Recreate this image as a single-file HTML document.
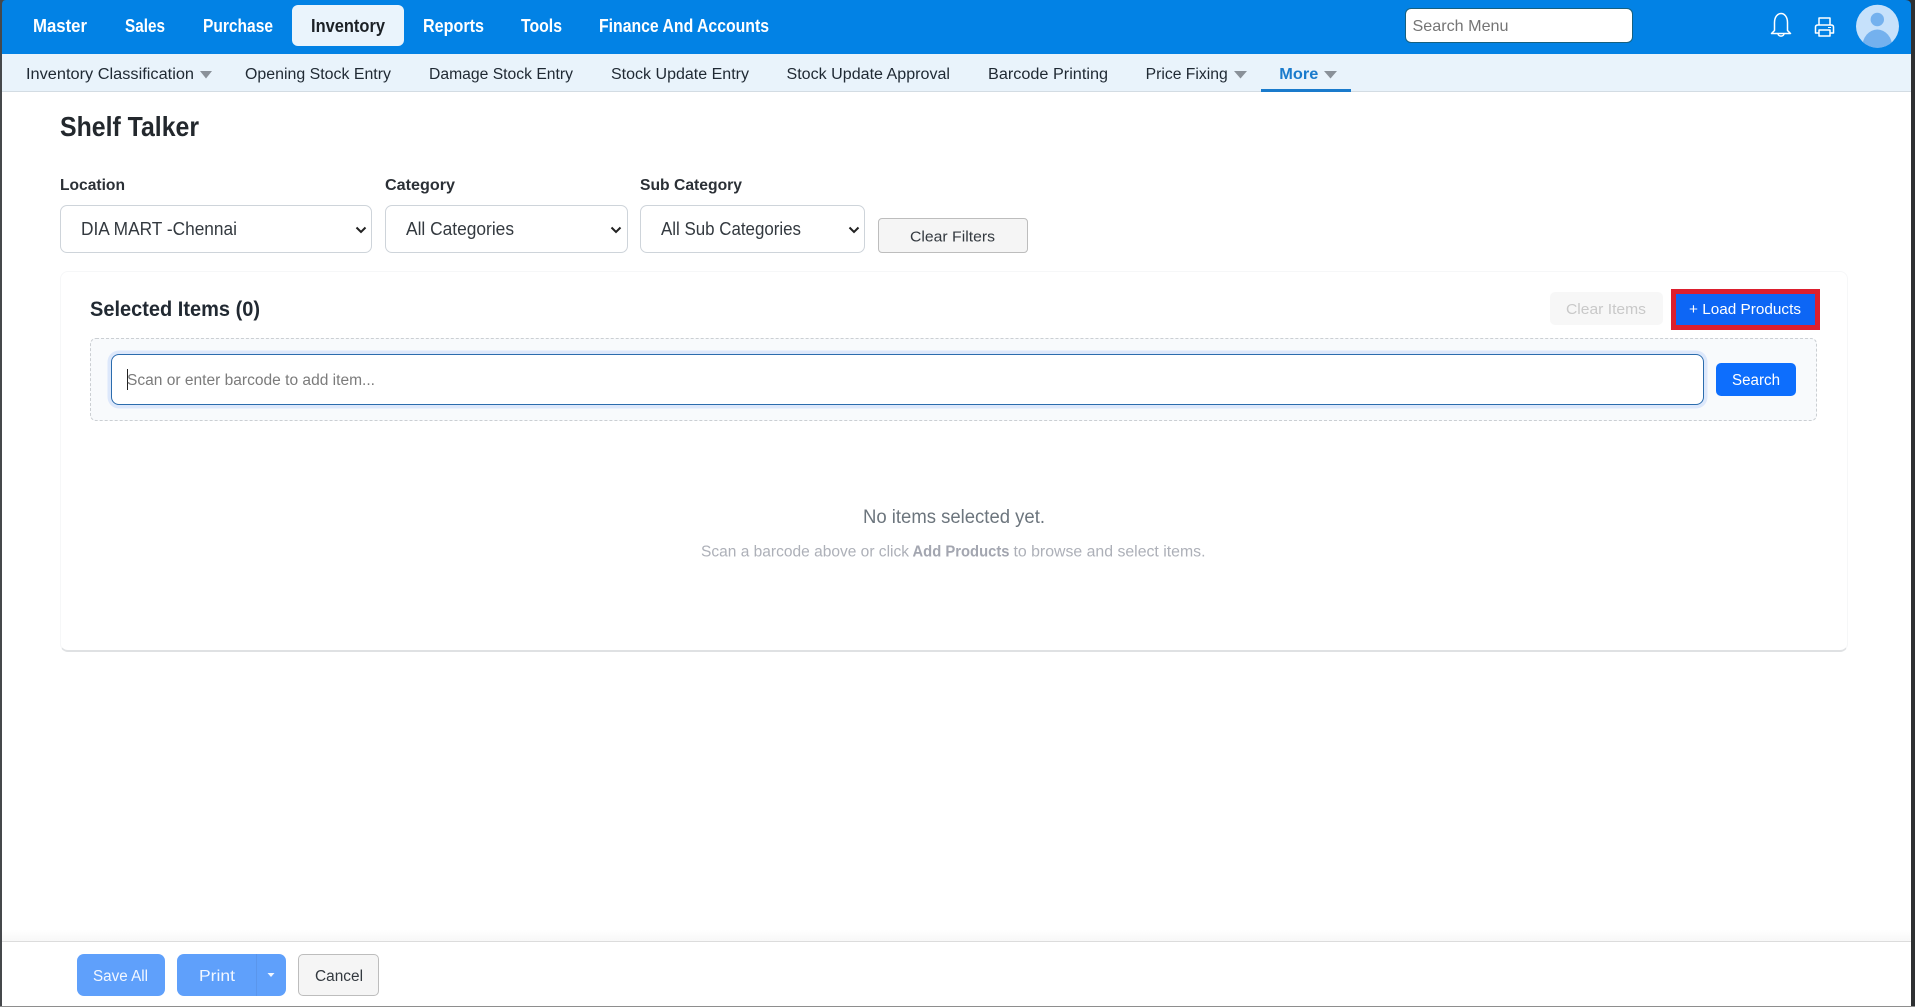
<!DOCTYPE html>
<html lang="en">
<head>
<meta charset="utf-8">
<title>Shelf Talker</title>
<style>
html,body{margin:0;padding:0;background:#fff;}
body{position:relative;width:1915px;height:1007px;overflow:hidden;font-family:"Liberation Sans",sans-serif;}
.b{position:absolute;box-sizing:border-box;}
svg.t{position:absolute;left:0;top:0;}
svg.t text{font-family:"Liberation Sans",sans-serif;}
.nav{font-size:18px;font-weight:700;fill:#fff;}
.sub{font-size:15.5px;fill:#1f2933;}
.lab{font-size:16px;font-weight:700;fill:#2b3036;}
.sel{font-size:18px;fill:#33393f;}
</style>
</head>
<body>
<div class="b" style="left:0;top:0;width:1915px;height:54px;background:#0282e5;"></div>
<div class="b" style="left:0;top:54px;width:1915px;height:38px;background:#e9f3fb;border-bottom:1px solid #d3dce3;"></div>
<div class="b" style="left:292px;top:5px;width:112px;height:41px;background:#eaf4fc;border-radius:6px;"></div>
<div class="b" style="left:1404.500px;top:8px;width:228px;height:35px;background:#fff;border:1px solid #16607f;border-radius:6px;"></div>
<div class="b" style="left:1261px;top:89px;width:90px;height:3px;background:#1a7bcc;"></div>

<div class="b" style="left:60px;top:205px;width:312px;height:48px;background:#fff;border:1px solid #ced4da;border-radius:7px;"></div>
<div class="b" style="left:385px;top:205px;width:243px;height:48px;background:#fff;border:1px solid #ced4da;border-radius:7px;"></div>
<div class="b" style="left:640px;top:205px;width:225px;height:48px;background:#fff;border:1px solid #ced4da;border-radius:7px;"></div>
<div class="b" style="left:878px;top:218px;width:150px;height:35px;background:#f5f5f5;border:1px solid #bdbdbd;border-radius:4px;"></div>

<div class="b" style="left:59.500px;top:271px;width:1788px;height:381px;background:#fff;border:1px solid #f6f7f8;border-bottom:2px solid #dfe1e3;border-radius:8px;"></div>
<div class="b" style="left:1550px;top:292px;width:113px;height:33px;background:#f7f7f7;border-radius:5px;"></div>
<div class="b" style="left:1671px;top:289px;width:149px;height:41px;background:#0d66f5;border:5px solid #dc1f2e;"></div>
<div class="b" style="left:90px;top:338px;width:1727px;height:83px;background:#f8fafc;border:1px dashed #cbcfd3;border-radius:6px;"></div>
<div class="b" style="left:111px;top:354px;width:1593px;height:51px;background:#fff;border:1.5px solid #2b6cad;border-radius:8px;box-shadow:0 0 0 3.5px #dde8fb;"></div>
<div class="b" style="left:127px;top:369px;width:1px;height:21px;background:#222;"></div>
<div class="b" style="left:1716px;top:363px;width:80px;height:33px;background:#0d6efd;border-radius:5px;"></div>

<div class="b" style="left:0;top:930px;width:1915px;height:12px;background:linear-gradient(#fff,#f7f7f7);"></div>
<div class="b" style="left:0;top:941px;width:1915px;height:66px;background:#fff;border-top:1px solid #dcdcdc;"></div>
<div class="b" style="left:77px;top:954px;width:88px;height:42px;background:#5fa0fb;border-radius:7px;"></div>
<div class="b" style="left:177px;top:954px;width:109px;height:42px;background:#5fa0fb;border-radius:7px;"></div>
<div class="b" style="left:256px;top:954px;width:1px;height:42px;background:#5a96ec;"></div>
<div class="b" style="left:298px;top:954px;width:81px;height:42px;background:#f5f5f5;border:1px solid #bdbdbd;border-radius:5px;"></div>

<svg class="t" width="1915" height="1007" viewBox="0 0 1915 1007" xmlns="http://www.w3.org/2000/svg">
  <text class="nav" x="33" y="32" textLength="54" lengthAdjust="spacingAndGlyphs">Master</text>
  <text class="nav" x="125" y="32" textLength="40" lengthAdjust="spacingAndGlyphs">Sales</text>
  <text class="nav" x="203" y="32" textLength="70" lengthAdjust="spacingAndGlyphs">Purchase</text>
  <text class="nav" x="311" y="32" textLength="74" lengthAdjust="spacingAndGlyphs" style="fill:#1c2126">Inventory</text>
  <text class="nav" x="423" y="32" textLength="61" lengthAdjust="spacingAndGlyphs">Reports</text>
  <text class="nav" x="521" y="32" textLength="41" lengthAdjust="spacingAndGlyphs">Tools</text>
  <text class="nav" x="599" y="32" textLength="170" lengthAdjust="spacingAndGlyphs">Finance And Accounts</text>

  <text x="1412.500" y="31" font-size="16" fill="#757575" textLength="96" lengthAdjust="spacingAndGlyphs">Search Menu</text>

  <!-- bell -->
  <path d="M1774.500 30.500V22.500C1774.500 17 1777.500 13.500 1781 13.500C1784.500 13.500 1787.500 17 1787.500 22.500V30.500L1790.500 33.500H1771.500ZM1778 33.500C1778 37 1784 37 1784 33.500" fill="none" stroke="#fff" stroke-width="1.500" stroke-linejoin="round"/>
  <!-- printer -->
  <path d="M1819 25V18H1830V25M1819 33H1815.500V27C1815.500 25.500 1816.500 25 1818 25H1831C1832.500 25 1833.500 25.500 1833.500 27V33H1830M1819 30H1830V36H1819Z" fill="none" stroke="#fff" stroke-width="1.500" stroke-linejoin="round"/>
  <path d="M1828 27.500H1831" stroke="#fff" stroke-width="1"/>
  <!-- avatar -->
  <defs><clipPath id="av"><circle cx="1877.500" cy="26.300" r="21.500"/></clipPath></defs>
  <circle cx="1877.500" cy="26.300" r="21.500" fill="#c6e1fb"/>
  <circle cx="1877.300" cy="19.500" r="6.700" fill="#74b1ee"/>
  <ellipse cx="1877.300" cy="47" rx="15" ry="17.500" fill="#74b1ee" clip-path="url(#av)"/>

  <text class="sub" x="26" y="79" textLength="168" lengthAdjust="spacingAndGlyphs">Inventory Classification</text>
  <path d="M200 71H212L206 78.500Z" fill="#8a9199"/>
  <text class="sub" x="245" y="79" textLength="146" lengthAdjust="spacingAndGlyphs">Opening Stock Entry</text>
  <text class="sub" x="429" y="79" textLength="144" lengthAdjust="spacingAndGlyphs">Damage Stock Entry</text>
  <text class="sub" x="611" y="79" textLength="138" lengthAdjust="spacingAndGlyphs">Stock Update Entry</text>
  <text class="sub" x="786.500" y="79" textLength="163.500" lengthAdjust="spacingAndGlyphs">Stock Update Approval</text>
  <text class="sub" x="988" y="79" textLength="120" lengthAdjust="spacingAndGlyphs">Barcode Printing</text>
  <text class="sub" x="1145.700" y="79" textLength="82" lengthAdjust="spacingAndGlyphs">Price Fixing</text>
  <path d="M1234 71H1247L1240.500 78.500Z" fill="#8a9199"/>
  <text class="sub" x="1279.300" y="79" textLength="39" lengthAdjust="spacingAndGlyphs" style="fill:#1a7bcc;font-weight:700">More</text>
  <path d="M1324 71H1337L1330.500 78.500Z" fill="#8a9199"/>

  <text x="60" y="136" font-size="28" font-weight="700" fill="#23282d" textLength="139" lengthAdjust="spacingAndGlyphs">Shelf Talker</text>

  <text class="lab" x="60" y="190" textLength="65" lengthAdjust="spacingAndGlyphs">Location</text>
  <text class="lab" x="385" y="190" textLength="70" lengthAdjust="spacingAndGlyphs">Category</text>
  <text class="lab" x="640" y="190" textLength="102" lengthAdjust="spacingAndGlyphs">Sub Category</text>

  <text class="sel" x="81" y="235" textLength="156" lengthAdjust="spacingAndGlyphs">DIA MART -Chennai</text>
  <path d="M356.500 227.500L361 232L365.500 227.500" fill="none" stroke="#222" stroke-width="2"/>
  <text class="sel" x="406" y="235" textLength="108" lengthAdjust="spacingAndGlyphs">All Categories</text>
  <path d="M611.500 227.500L616 232L620.500 227.500" fill="none" stroke="#222" stroke-width="2"/>
  <text class="sel" x="661" y="235" textLength="140" lengthAdjust="spacingAndGlyphs">All Sub Categories</text>
  <path d="M849.500 227.500L854 232L858.500 227.500" fill="none" stroke="#222" stroke-width="2"/>
  <text x="910" y="241.500" font-size="15" fill="#33393f" textLength="85" lengthAdjust="spacingAndGlyphs">Clear Filters</text>

  <text x="90" y="316" font-size="21.500" font-weight="700" fill="#212932" textLength="170" lengthAdjust="spacingAndGlyphs">Selected Items (0)</text>
  <text x="1566" y="314" font-size="15" fill="#c9c9c9" textLength="80" lengthAdjust="spacingAndGlyphs">Clear Items</text>
  <text x="1689" y="314" font-size="15" fill="#fff" textLength="112" lengthAdjust="spacingAndGlyphs">+ Load Products</text>
  <text x="127" y="385" font-size="15.500" fill="#7b7b7b" textLength="248" lengthAdjust="spacingAndGlyphs">Scan or enter barcode to add item...</text>
  <text x="1732" y="385" font-size="15.500" fill="#fff" textLength="48" lengthAdjust="spacingAndGlyphs">Search</text>

  <text x="863" y="523" font-size="19.500" fill="#6c757d" textLength="182" lengthAdjust="spacingAndGlyphs">No items selected yet.</text>
  <text x="701" y="556.500" font-size="15.500" fill="#adb0b8" textLength="208" lengthAdjust="spacingAndGlyphs">Scan a barcode above or click</text>
  <text x="912.500" y="556.500" font-size="15.500" font-weight="700" fill="#a3a6b0" textLength="97" lengthAdjust="spacingAndGlyphs">Add Products</text>
  <text x="1013.500" y="556.500" font-size="15.500" fill="#adb0b8" textLength="192" lengthAdjust="spacingAndGlyphs">to browse and select items.</text>

  <text x="93" y="981" font-size="15.500" fill="#f2f7ff" textLength="55" lengthAdjust="spacingAndGlyphs">Save All</text>
  <text x="199" y="981" font-size="15.500" fill="#f2f7ff" textLength="36" lengthAdjust="spacingAndGlyphs">Print</text>
  <path d="M267.500 973H274.500L271 977Z" fill="#f2f7ff"/>
  <text x="315" y="981" font-size="15.500" fill="#33393f" textLength="48" lengthAdjust="spacingAndGlyphs">Cancel</text>

  <!-- rounded window corners -->
  <path d="M0 0H6C3 0 2 2 2 5V8H0Z" fill="#45484b"/>
  <path d="M1915 0H1905C1909 0 1911 2 1911 5V8H1915Z" fill="#2e3032"/>
</svg>

<!-- window frame -->
<div class="b" style="left:0;top:0;width:2px;height:1007px;background:#45484b;"></div>
<div class="b" style="left:1911px;top:0;width:4px;height:1007px;background:#2e3032;"></div>
<div class="b" style="left:0;top:1006px;width:1915px;height:1px;background:#8e8e8e;"></div>
</body>
</html>
